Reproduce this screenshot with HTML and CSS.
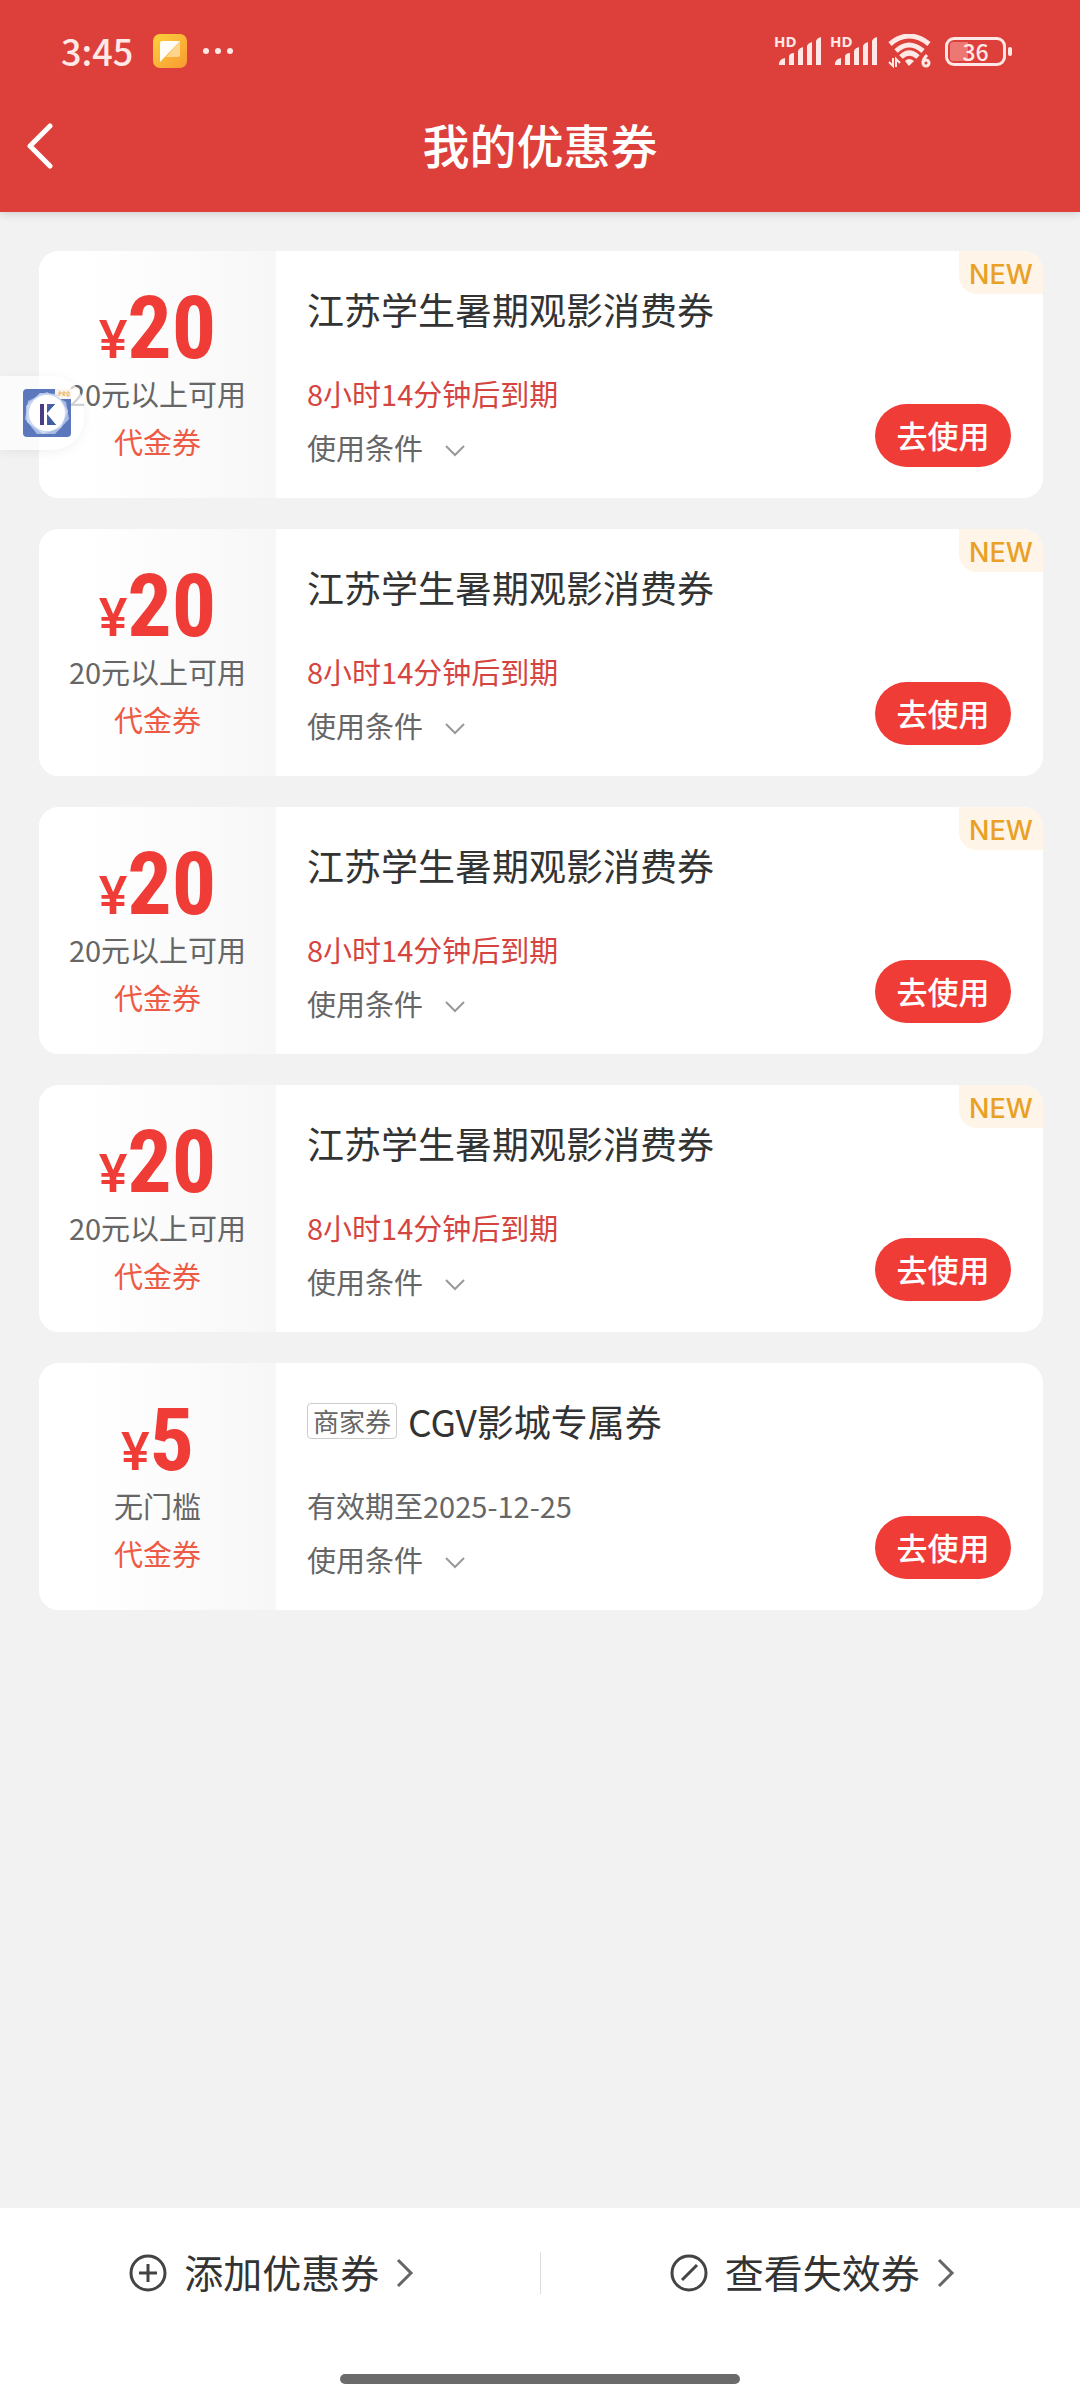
FILE: index.html
```html
<!DOCTYPE html>
<html lang="zh-CN">
<head>
<meta charset="utf-8">
<meta name="viewport" content="width=device-width, initial-scale=1">
<title>我的优惠券</title>
<link rel="stylesheet" href="styles.css">
</head>
<body>
<svg class="defs" width="0" height="0" aria-hidden="true">
  <symbol id="down" viewBox="0 0 20 12"><path d="M1 1l9 9 9-9" fill="none" stroke="#999" stroke-width="2"/></symbol>
  <symbol id="right" viewBox="0 0 18 30"><path d="M2 2l13 13L2 28" fill="none" stroke="#666" stroke-width="3"/></symbol>
  <symbol id="signal" viewBox="0 0 42 28"><path d="M0 28v-2q1-4 6-5v7zM10 28V19q1-3 5-3v12zM19 28V14q1-3 5-4v18zM28 28V9q1-3 5-4v23zM37 28V4q1-3 5-4v28z" fill="#ffe8e6"/></symbol>
</svg>

<header class="header">
  <div class="status">
    <span class="clock">3:45</span>
    <svg class="app-icon" width="34" height="34" viewBox="0 0 34 34" aria-hidden="true">
      <defs><linearGradient id="amber" x1="0" y1="0" x2="1" y2="1"><stop offset="0" stop-color="#fbd03c"/><stop offset="1" stop-color="#f99a33"/></linearGradient></defs>
      <rect width="34" height="34" rx="7" fill="url(#amber)"/>
      <path d="M27 7v14q0 2-2 2H13z" fill="#fdd58c"/>
      <path d="M7 9q0-2 2-2h18L7 28z" fill="#fffdf5"/>
    </svg>
    <svg class="dots" width="32" height="8" viewBox="0 0 32 8" aria-hidden="true"><g fill="#ffe8e6"><circle cx="4" cy="4" r="3"/><circle cx="16" cy="4" r="3"/><circle cx="28" cy="4" r="3"/></g></svg>
    <div class="indicators">
      <span class="cell"><span class="hd">HD</span><svg width="42" height="28"><use href="#signal"/></svg></span>
      <span class="cell"><span class="hd">HD</span><svg width="42" height="28"><use href="#signal"/></svg></span>
      <svg class="wifi" width="44" height="34" viewBox="0 0 44 34" aria-hidden="true">
        <g fill="none" stroke="#ffe8e6" stroke-width="5">
          <path d="M2 10Q21-6 41 10"/><path d="M8 17Q21 5 35 17"/><path d="M13 23Q21 15 30 23"/>
        </g>
        <path d="M17 27q4-4 9 0l-4 4q-1 1-2 0z" fill="#ffe8e6"/>
        <path d="M5 24v8l-4-4M8 33v-8l4 4" fill="none" stroke="#ffe8e6" stroke-width="2"/>
        <path d="M39 21q-4 4-4 7" fill="none" stroke="#ffe8e6" stroke-width="3"/><circle cx="38" cy="29" r="3" fill="none" stroke="#ffe8e6" stroke-width="3"/>
      </svg>
      <span class="battery"><span class="level">36</span></span>
    </div>
  </div>
  <div class="titlebar">
    <button class="back" aria-label="返回"><svg width="28" height="46" viewBox="0 0 28 46"><path d="M24 3L4 23l20 20" fill="none" stroke="#fff" stroke-width="5" stroke-linecap="round" stroke-linejoin="round"/></svg></button>
    <h1>我的优惠券</h1>
  </div>
</header>

<main class="list">
  <article class="card">
    <div class="value"><div class="amount"><span class="yen">¥</span>20</div><div class="limit">20元以上可用</div><div class="kind">代金券</div></div>
    <div class="info"><h2>江苏学生暑期观影消费券</h2><div class="expiry soon">8小时14分钟后到期</div><button class="terms">使用条件<svg width="20" height="12"><use href="#down"/></svg></button></div>
    <button class="use">去使用</button><span class="new">NEW</span>
  </article>
  <article class="card">
    <div class="value"><div class="amount"><span class="yen">¥</span>20</div><div class="limit">20元以上可用</div><div class="kind">代金券</div></div>
    <div class="info"><h2>江苏学生暑期观影消费券</h2><div class="expiry soon">8小时14分钟后到期</div><button class="terms">使用条件<svg width="20" height="12"><use href="#down"/></svg></button></div>
    <button class="use">去使用</button><span class="new">NEW</span>
  </article>
  <article class="card">
    <div class="value"><div class="amount"><span class="yen">¥</span>20</div><div class="limit">20元以上可用</div><div class="kind">代金券</div></div>
    <div class="info"><h2>江苏学生暑期观影消费券</h2><div class="expiry soon">8小时14分钟后到期</div><button class="terms">使用条件<svg width="20" height="12"><use href="#down"/></svg></button></div>
    <button class="use">去使用</button><span class="new">NEW</span>
  </article>
  <article class="card">
    <div class="value"><div class="amount"><span class="yen">¥</span>20</div><div class="limit">20元以上可用</div><div class="kind">代金券</div></div>
    <div class="info"><h2>江苏学生暑期观影消费券</h2><div class="expiry soon">8小时14分钟后到期</div><button class="terms">使用条件<svg width="20" height="12"><use href="#down"/></svg></button></div>
    <button class="use">去使用</button><span class="new">NEW</span>
  </article>
  <article class="card">
    <div class="value"><div class="amount"><span class="yen">¥</span>5</div><div class="limit">无门槛</div><div class="kind">代金券</div></div>
    <div class="info"><h2><span class="tag">商家券</span>CGV影城专属券</h2><div class="expiry">有效期至2025-12-25</div><button class="terms">使用条件<svg width="20" height="12"><use href="#down"/></svg></button></div>
    <button class="use">去使用</button>
  </article>
</main>

<footer class="footer">
  <nav class="actions">
    <a href="#add"><svg width="38" height="38" viewBox="0 0 38 38" fill="none" stroke="#444" stroke-width="3"><circle cx="19" cy="19" r="17"/><path d="M19 10v18M10 19h18"/></svg><span>添加优惠券</span><svg width="18" height="30"><use href="#right"/></svg></a>
    <a href="#expired"><svg width="38" height="38" viewBox="0 0 38 38" fill="none" stroke="#444" stroke-width="3"><circle cx="19" cy="19" r="17"/><path d="M12 26l15-15"/></svg><span>查看失效券</span><svg width="18" height="30"><use href="#right"/></svg></a>
  </nav>
  <div class="home"></div>
</footer>

<button class="floater" aria-label="悬浮窗">
  <svg width="48" height="48" viewBox="0 0 48 48" aria-hidden="true">
    <defs><linearGradient id="navy" x1="0" y1="0" x2="1" y2="1"><stop offset="0" stop-color="#7358a8"/><stop offset="1" stop-color="#1f5699"/></linearGradient></defs>
    <rect width="48" height="48" rx="4" fill="#5b78bd"/>
    <path d="M32 0h16v10H36q-4 0-4-4z" fill="#fbf3ef"/>
    <path d="M36 7V3h2v2h-2M40 7V3h2v2h-2l2 2M44 3h2v4h-2z" fill="none" stroke="#e5b75e" stroke-width="1"/>
    <path d="M24 3l19 10 3 17-14 15-18 0L2 30 5 12z" fill="#a9bce3"/>
    <path d="M17 4l17 1 11 17-7 17-18 6L4 33 3 17z" fill="#d3dff4" opacity=".8"/>
    <circle cx="24" cy="24" r="18" fill="#fff"/>
    <path d="M17 15h4v21h-4z" fill="#4b3b86"/><path d="M24 15v9l8-9zM24 25l9 11h-9z" fill="url(#navy)"/><path d="M24 24l8-9h-5l-3 4zM24 25l9 11h-5z" fill="#3e62a4"/>
  </svg>
</button>
</body>
</html>
```
FILE: styles.css
```css
* { box-sizing: border-box; }

body {
  margin: 0;
  min-height: 100vh;
  display: flex;
  flex-direction: column;
  position: relative;
  background: #f2f2f2;
  color: #333;
  font-family: "Noto Sans CJK SC", sans-serif;
}

h1, h2 { margin: 0; }
button { border: 0; padding: 0; background: none; font: inherit; color: inherit; }
svg { display: block; flex: none; }
.defs { position: absolute; }

.header {
  background: #dd403b;
  color: #fff;
  box-shadow: 0 2px 8px rgba(0, 0, 0, .15);
}

.status {
  height: 80px;
  padding: 22px 68px 0 61px;
  display: flex;
  align-items: center;
  color: #ffe8e6;
}
.clock { font-size: 36px; font-weight: 500; line-height: 50px; padding-bottom: 2px; }
.app-icon { margin-left: 20px; }
.dots { margin-left: 15px; }
.indicators { margin-left: auto; display: flex; align-items: center; }
.cell { position: relative; padding-left: 5px; margin-right: 9px; }
.hd {
  position: absolute;
  left: 0;
  top: -4px;
  font: 700 15px/16px "Open Sans", sans-serif;
}
.wifi { margin: 0 13px 0 2px; }
.battery {
  position: relative;
  width: 61px;
  height: 29px;
  border: 3px solid #ffe8e6;
  border-radius: 9px;
  padding: 2px;
  margin-right: 6px;
}
.battery::after {
  content: "";
  position: absolute;
  right: -9px;
  top: 7px;
  width: 4px;
  height: 9px;
  border-radius: 2px;
  background: #ffe8e6;
}
.level {
  display: block;
  height: 19px;
  border-radius: 3px;
  background: linear-gradient(90deg, #ec7773 36%, transparent 36%);
  font-size: 23px;
  font-weight: 500;
  line-height: 18px;
  text-align: center;
}

.titlebar {
  height: 132px;
  padding: 0 26px;
  display: grid;
  grid-template-columns: 28px 1fr 28px;
  align-items: center;
}
.titlebar h1 { padding-bottom: 4px; font-size: 47px; font-weight: 500; line-height: 64px; text-align: center; }

.list {
  flex: 1;
  padding: 39px 37px 39px 39px;
  display: flex;
  flex-direction: column;
  gap: 31px;
}

.card {
  position: relative;
  display: flex;
  background: #fff;
  border-radius: 20px;
  overflow: hidden;
}
.value {
  width: 237px;
  flex: none;
  padding-top: 30px;
  background: linear-gradient(90deg, #fff 20%, #f7f7f7);
  text-align: center;
  font-size: 29px;
  line-height: 36px;
}
.amount {
  height: 94px;
  color: #f03c37;
  font: 700 88px/94px "Roboto Condensed", "Open Sans Condensed", "Noto Sans Condensed", "Liberation Sans", sans-serif;
}
.yen { font: 500 54px/94px Roboto, sans-serif; }
.limit { color: #666; }
.kind { margin-top: 12px; color: #ee5b45; }

.info { flex: 1; padding: 34px 0 33px 31px; font-size: 29px; line-height: 36px; color: #666; }
.info h2 {
  display: flex;
  align-items: center;
  gap: 11px;
  font-size: 37px;
  font-weight: 400;
  line-height: 48px;
  color: #333;
}
.tag {
  padding: 0 5px;
  border: 1px solid #ccc;
  border-radius: 4px;
  font-size: 26px;
  line-height: 34px;
  color: #666;
}
.expiry { margin: 42px 0 18px; }
.soon { color: #d5443f; }
.terms { display: flex; align-items: center; gap: 22px; }
.terms svg { margin-top: 8px; }

.use {
  align-self: flex-end;
  width: 136px;
  height: 63px;
  margin: 0 32px 31px 0;
  padding-bottom: 3px;
  border-radius: 32px;
  background: #f03c37;
  color: #fff;
  font-size: 31px;
  font-weight: 500;
}
.new {
  position: absolute;
  top: 0;
  right: 0;
  width: 84px;
  height: 43px;
  border-radius: 0 0 0 18px;
  background: #fff4e8;
  color: #e8a125;
  font: 500 27px/48px Inter, sans-serif;
  text-align: center;
}

.footer { height: 192px; background: #fff; display: flex; flex-direction: column; }
.actions { display: flex; padding-top: 44px; }
.actions a {
  flex: 1;
  height: 42px;
  padding-left: 4px;
  display: flex;
  align-items: center;
  justify-content: center;
  gap: 17px;
  color: #333;
  font-size: 39px;
  line-height: 42px;
  text-decoration: none;
}
.actions span { padding-bottom: 4px; }
.actions a + a { border-left: 1px solid #ddd; }
.home { width: 400px; height: 10px; margin: auto auto 16px; border-radius: 5px; background: #6b6b6b; }

.floater {
  position: absolute;
  left: 0;
  top: 376px;
  width: 84px;
  height: 74px;
  padding-left: 23px;
  display: flex;
  align-items: center;
  border-radius: 0 32px 32px 0;
  background: rgba(255, 255, 255, .7);
  box-shadow: 0 2px 12px rgba(0, 0, 0, .06);
}
```
